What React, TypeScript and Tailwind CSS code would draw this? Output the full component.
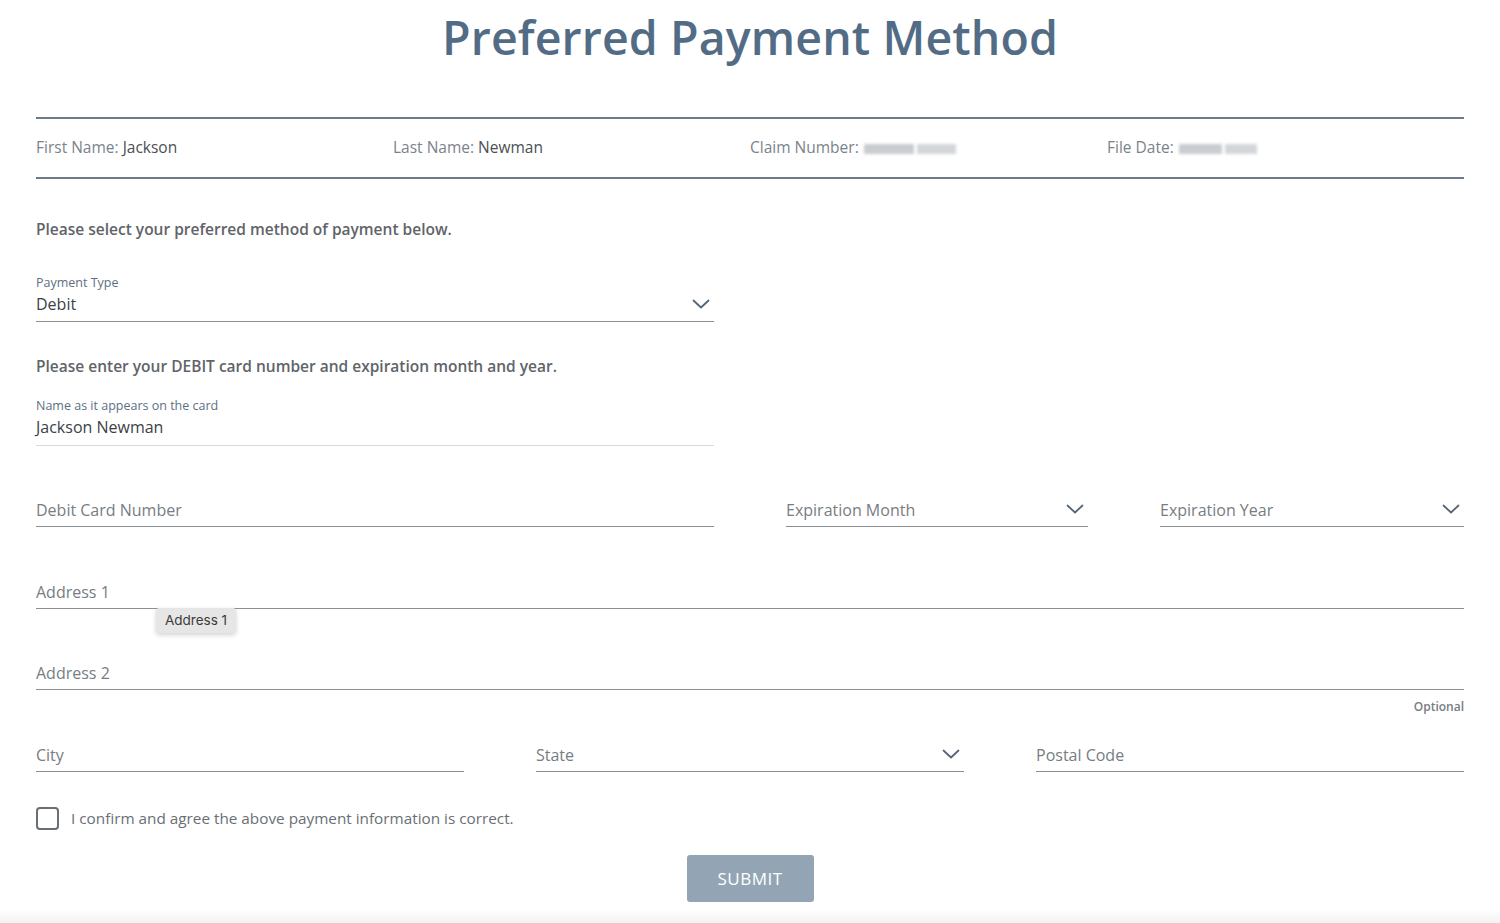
import React from 'react';

const font = { fontFamily: '"Open Sans", "Noto Sans", sans-serif' };

const Chevron: React.FC = () => (
  <svg width="18" height="10" viewBox="0 0 18 10" fill="none" className="shrink-0">
    <polyline points="1.5,1.5 9,8.5 16.5,1.5" stroke="#556677" strokeWidth="1.8" strokeLinecap="round" strokeLinejoin="round" />
  </svg>
);

interface FieldProps {
  placeholder: string;
  select?: boolean;
  className?: string;
}

const Field: React.FC<FieldProps> = ({ placeholder, select, className }) => (
  <div className={`flex items-center justify-between border-b border-[#8a8f94] h-[36px] pr-[4px] ${className ?? ''}`}>
    <span className="text-[16px] text-[#777d82] pt-[2px]">{placeholder}</span>
    {select && <Chevron />}
  </div>
);

const Blurred: React.FC<{ w: number }> = ({ w }) => (
  <span className="inline-flex items-center gap-[3px] ml-[5px] align-middle">
    <span className="h-[10px] bg-[#c9ccd0] blur-[1.5px]" style={{ width: w * 0.55 }} />
    <span className="h-[10px] bg-[#d3d6d9] blur-[1.5px]" style={{ width: w * 0.42 }} />
  </span>
);

export default function App() {
  return (
    <div className="min-h-[923px] bg-white relative overflow-hidden" style={font}>
      <div className="px-[36px]">
        <h1 className="text-center text-[46.5px] leading-none font-semibold text-[#536c85] pt-[14px] tracking-[0.1px]">
          Preferred Payment Method
        </h1>

        <div className="mt-[56px] border-t-2 border-b-2 border-[#6d7c88] h-[62px] grid grid-cols-4 items-center text-[15.5px] text-[#7a838b]">
          <div>First Name: <span className="font-medium text-[#4b4f53]">Jackson</span></div>
          <div>Last Name: <span className="font-medium text-[#4b4f53]">Newman</span></div>
          <div>Claim Number:<Blurred w={92} /></div>
          <div>File Date:<Blurred w={78} /></div>
        </div>

        <p className="mt-[39px] text-[15.5px] font-semibold text-[#5f6469]">
          Please select your preferred method of payment below.
        </p>

        <div className="mt-[33px] w-[678px] border-b border-[#8a8f94] pb-[5px]">
          <div className="text-[12.5px] text-[#5d7082] leading-[18px]">Payment Type</div>
          <div className="flex items-center justify-between pr-[4px]">
            <span className="text-[16px] text-[#3d4145]">Debit</span>
            <Chevron />
          </div>
        </div>

        <p className="mt-[33px] text-[15.5px] font-semibold text-[#5f6469]">
          Please enter your DEBIT card number and expiration month and year.
        </p>

        <div className="mt-[19px] w-[678px] border-b border-[#d7d9db] pb-[6px]">
          <div className="text-[12.5px] text-[#5d7082] leading-[18px]">Name as it appears on the card</div>
          <div className="text-[16px] text-[#3d4145] leading-[24px]">Jackson Newman</div>
        </div>

        <div className="mt-[45px] flex gap-[72px]">
          <Field placeholder="Debit Card Number" className="w-[678px]" />
          <Field placeholder="Expiration Month" select className="w-[302px]" />
          <Field placeholder="Expiration Year" select className="flex-1" />
        </div>

        <div className="mt-[46px] relative">
          <Field placeholder="Address 1" />
          <div className="absolute left-[120px] top-[35px] px-[9px] h-[25px] flex items-center rounded-[3px] bg-[#e6e6e6] text-[13.5px] text-[#3b3b3b] shadow-[0_2px_5px_rgba(0,0,0,0.18)]" style={{ fontFamily: '"Inter", "Liberation Sans", sans-serif' }}>
            Address 1
          </div>
        </div>

        <Field placeholder="Address 2" className="mt-[45px]" />
        <div className="text-right text-[12px] font-semibold text-[#777d82] mt-[9px] leading-[16px]">Optional</div>

        <div className="mt-[21px] grid grid-cols-3 gap-[72px]">
          <Field placeholder="City" />
          <Field placeholder="State" select />
          <Field placeholder="Postal Code" />
        </div>

        <label className="mt-[35px] flex items-center gap-[12px]">
          <span className="w-[23px] h-[23px] rounded-[4px] border-2 border-[#6a6f74]" />
          <span className="text-[15.3px] text-[#6a6f74]">I confirm and agree the above payment information is correct.</span>
        </label>

        <div className="mt-[25px] flex justify-center">
          <button className="w-[127px] h-[47px] rounded-[3px] bg-[#93a5b4] text-white text-[17px] tracking-[0.5px]">
            SUBMIT
          </button>
        </div>
      </div>
      <div className="absolute left-0 right-0 bottom-0 h-[14px] bg-gradient-to-b from-white to-[#f2f2f2]" />
    </div>
  );
}
